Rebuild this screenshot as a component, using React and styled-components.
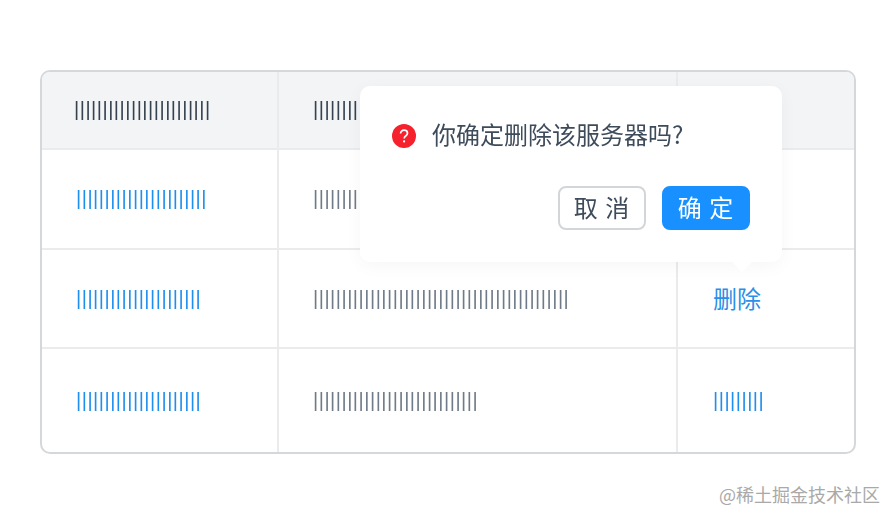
import React from "react";
import styled, { createGlobalStyle } from "styled-components";

const Global = createGlobalStyle`
  html, body {
    margin: 0;
    background: #fff;
  }
  body {
    font-family: "Noto Sans CJK SC", "Noto Sans", sans-serif;
  }
`;

const App = () => {
  return (
    <Page>
      <Global />
      <TableWrap>
        <Table>
          <HeadRow>
            <Cell>
              <Bars $head $shift={-3}>{"|".repeat(24)}</Bars>
            </Cell>
            <Cell>
              <Bars $head>{"|".repeat(8)}</Bars>
            </Cell>
            <Cell />
          </HeadRow>
          <Row>
            <Cell>
              <Bars $link>{"|".repeat(23)}</Bars>
            </Cell>
            <Cell>
              <Bars>{"|".repeat(8)}</Bars>
            </Cell>
            <Cell />
          </Row>
          <Row>
            <Cell>
              <Bars $link>{"|".repeat(22)}</Bars>
            </Cell>
            <Cell>
              <Bars>{"|".repeat(45)}</Bars>
            </Cell>
            <Cell>
              <DeleteLink>删除</DeleteLink>
            </Cell>
          </Row>
          <LastRow>
            <Cell>
              <Bars $link>{"|".repeat(22)}</Bars>
            </Cell>
            <Cell>
              <Bars>{"|".repeat(29)}</Bars>
            </Cell>
            <Cell>
              <Bars $link $shift={0}>{"|".repeat(9)}</Bars>
            </Cell>
          </LastRow>
        </Table>
        <Popover>
          <Message>
            <svg width="24" height="24" viewBox="0 0 24 24">
              <circle cx="12" cy="12" r="12" fill="#f5222d" />
              <path
                d="M8.6 9.6c0-2 1.5-3.4 3.5-3.4s3.4 1.3 3.4 3c0 1.3-.7 2-1.8 2.8-1 .7-1.5 1.2-1.5 2.5"
                fill="none"
                stroke="#fff"
                strokeWidth="1.7"
              />
              <circle cx="12.1" cy="17.4" r="1.1" fill="#fff" />
            </svg>
            <MessageText>你确定删除该服务器吗?</MessageText>
          </Message>
          <Actions>
            <Button>取 消</Button>
            <Button $primary>确 定</Button>
          </Actions>
          <Arrow />
        </Popover>
      </TableWrap>
      <Watermark>@稀土掘金技术社区</Watermark>
    </Page>
  );
};

const Page = styled.div`
  width: 896px;
  height: 522px;
  box-sizing: border-box;
  padding: 70px 40px 0 40px;
  overflow: hidden;
`;
const TableWrap = styled.div`
  position: relative;
  width: 816px;
`;
const Table = styled.div`
  height: 384px;
  box-sizing: border-box;
  border: 2px solid #d5d8db;
  border-radius: 10px;
  overflow: hidden;
  display: grid;
  grid-template-rows: 78px 100px 99px 1fr;
`;
const Row = styled.div`
  display: grid;
  grid-template-columns: 237px 399px 1fr;
  border-bottom: 2px solid #e9ebed;
`;
const HeadRow = styled(Row)`
  background: #f2f4f6;
`;
const LastRow = styled(Row)`
  border-bottom: none;
`;
const Cell = styled.div`
  display: flex;
  align-items: center;
  padding-left: 35px;
  border-right: 2px solid #e9ebed;
  &:last-child {
    border-right: none;
  }
`;
const Bars = styled.span`
  font-family: "Liberation Sans", sans-serif;
  font-size: 20px;
  line-height: 20px;
  white-space: nowrap;
  letter-spacing: 0.5px;
  will-change: transform;
  padding-bottom: 2px;
  color: ${(p) => (p.$link ? "#1f8fee" : p.$head ? "#36424f" : "#6f7b88")};
  margin-left: ${(p) => p.$shift ?? -1}px;
`;
const DeleteLink = styled.span`
  font-size: 24px;
  line-height: 30px;
  padding-bottom: 2px;
  color: #2a8fe8;
`;
const Popover = styled.div`
  position: absolute;
  left: 320px;
  top: 16px;
  width: 422px;
  height: 176px;
  box-sizing: border-box;
  padding: 36px 32px 0 32px;
  background: #fff;
  border-radius: 10px;
  box-shadow: 0 4px 18px rgba(0, 0, 0, 0.04);
`;
const Message = styled.div`
  display: flex;
  align-items: center;
  gap: 16px;
  height: 28px;
  font-size: 24px;
  color: #3e4b5a;
`;
const MessageText = styled.span`
  line-height: 28px;
  margin-top: -4px;
`;
const Actions = styled.div`
  display: flex;
  justify-content: flex-end;
  gap: 16px;
  margin-top: 36px;
`;
const Button = styled.div`
  width: 88px;
  height: 44px;
  box-sizing: border-box;
  display: flex;
  align-items: center;
  justify-content: center;
  padding-bottom: 4px;
  border-radius: 8px;
  font-size: 24px;
  letter-spacing: 1px;
  border: 2px solid ${(p) => (p.$primary ? "#1890ff" : "#d3d6d9")};
  background: ${(p) => (p.$primary ? "#1890ff" : "#fff")};
  color: ${(p) => (p.$primary ? "#fff" : "#3e4b5a")};
`;
const Arrow = styled.div`
  position: absolute;
  left: 375px;
  bottom: -7px;
  width: 14px;
  height: 14px;
  background: #fff;
  transform: rotate(45deg);
`;
const Watermark = styled.div`
  margin-top: 28px;
  margin-right: -24px;
  text-align: right;
  font-size: 18px;
  line-height: 24px;
  color: #a9a9a9;
`;

export default App;
